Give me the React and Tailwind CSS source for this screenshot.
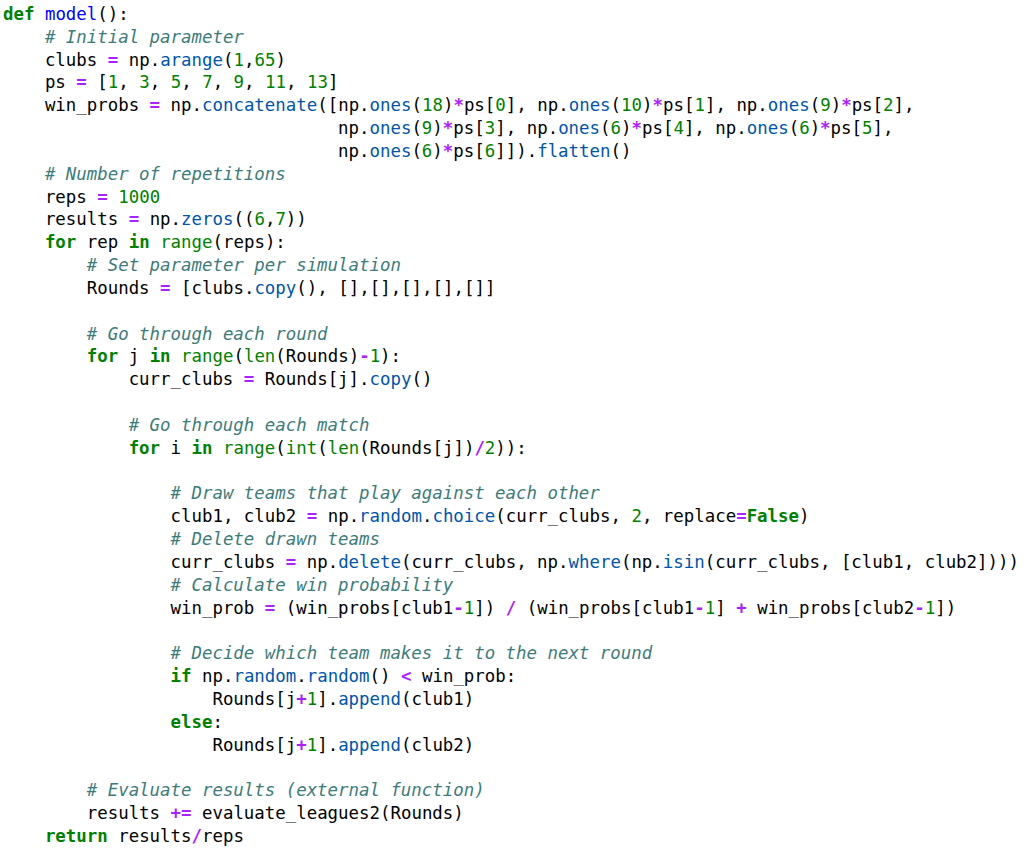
import React from "react";

const source = `def model():
    # Initial parameter
    clubs = np.arange(1,65)
    ps = [1, 3, 5, 7, 9, 11, 13]
    win_probs = np.concatenate([np.ones(18)*ps[0], np.ones(10)*ps[1], np.ones(9)*ps[2],
                                np.ones(9)*ps[3], np.ones(6)*ps[4], np.ones(6)*ps[5],
                                np.ones(6)*ps[6]]).flatten()
    # Number of repetitions
    reps = 1000
    results = np.zeros((6,7))
    for rep in range(reps):
        # Set parameter per simulation
        Rounds = [clubs.copy(), [],[],[],[],[]]

        # Go through each round
        for j in range(len(Rounds)-1):
            curr_clubs = Rounds[j].copy()

            # Go through each match
            for i in range(int(len(Rounds[j])/2)):

                # Draw teams that play against each other
                club1, club2 = np.random.choice(curr_clubs, 2, replace=False)
                # Delete drawn teams
                curr_clubs = np.delete(curr_clubs, np.where(np.isin(curr_clubs, [club1, club2])))
                # Calculate win probability
                win_prob = (win_probs[club1-1]) / (win_probs[club1-1] + win_probs[club2-1])

                # Decide which team makes it to the next round
                if np.random.random() < win_prob:
                    Rounds[j+1].append(club1)
                else:
                    Rounds[j+1].append(club2)

        # Evaluate results (external function)
        results += evaluate_leagues2(Rounds)
    return results/reps`;

const keywords = new Set(["def", "for", "in", "if", "else", "return", "False"]);
const builtins = new Set(["range", "len", "int"]);

const styles = {
  kw: "font-bold text-[#008000]",
  def: "text-[#0000ff]",
  builtin: "text-[#008000]",
  num: "text-[#008000]",
  op: "font-bold text-[#aa22ff]",
  attr: "text-[#0055aa]",
  comment: "italic text-[#3d7b7b]",
  plain: "",
};

// tiny python-ish highlighter, good enough for this snippet
function tokenize(line) {
  const re = /(#.*$)|([A-Za-z_][A-Za-z0-9_]*)|(\d+)|(\+=|[=*\/+\-<])|(\s+)|(.)/g;
  const out = [];
  let m;
  let prevWord = "";
  let prevChar = "";
  while ((m = re.exec(line)) !== null) {
    const text = m[0];
    let type = "plain";
    if (m[1]) type = "comment";
    else if (m[2]) {
      if (keywords.has(text)) type = "kw";
      else if (prevWord === "def") type = "def";
      else if (prevChar === ".") type = "attr";
      else if (builtins.has(text)) type = "builtin";
      prevWord = text;
    } else if (m[3]) type = "num";
    else if (m[4]) type = "op";
    if (!m[5]) prevChar = text[text.length - 1];
    out.push({ text, type });
  }
  return out;
}

export default function App() {
  const lines = source.split("\n");
  return (
    <div className="w-[1024px] h-[852px] bg-white overflow-hidden">
      <pre className="pt-[3px] pl-[3px] text-[17.4px] leading-[22.83px] text-[#000] font-['DejaVu_Sans_Mono','Liberation_Mono',monospace]">
        {lines.map((line, i) => (
          <div key={i} className="h-[22.83px] whitespace-pre">
            {tokenize(line).map((t, j) => (
              <span key={j} className={styles[t.type]}>
                {t.text}
              </span>
            ))}
          </div>
        ))}
      </pre>
    </div>
  );
}
